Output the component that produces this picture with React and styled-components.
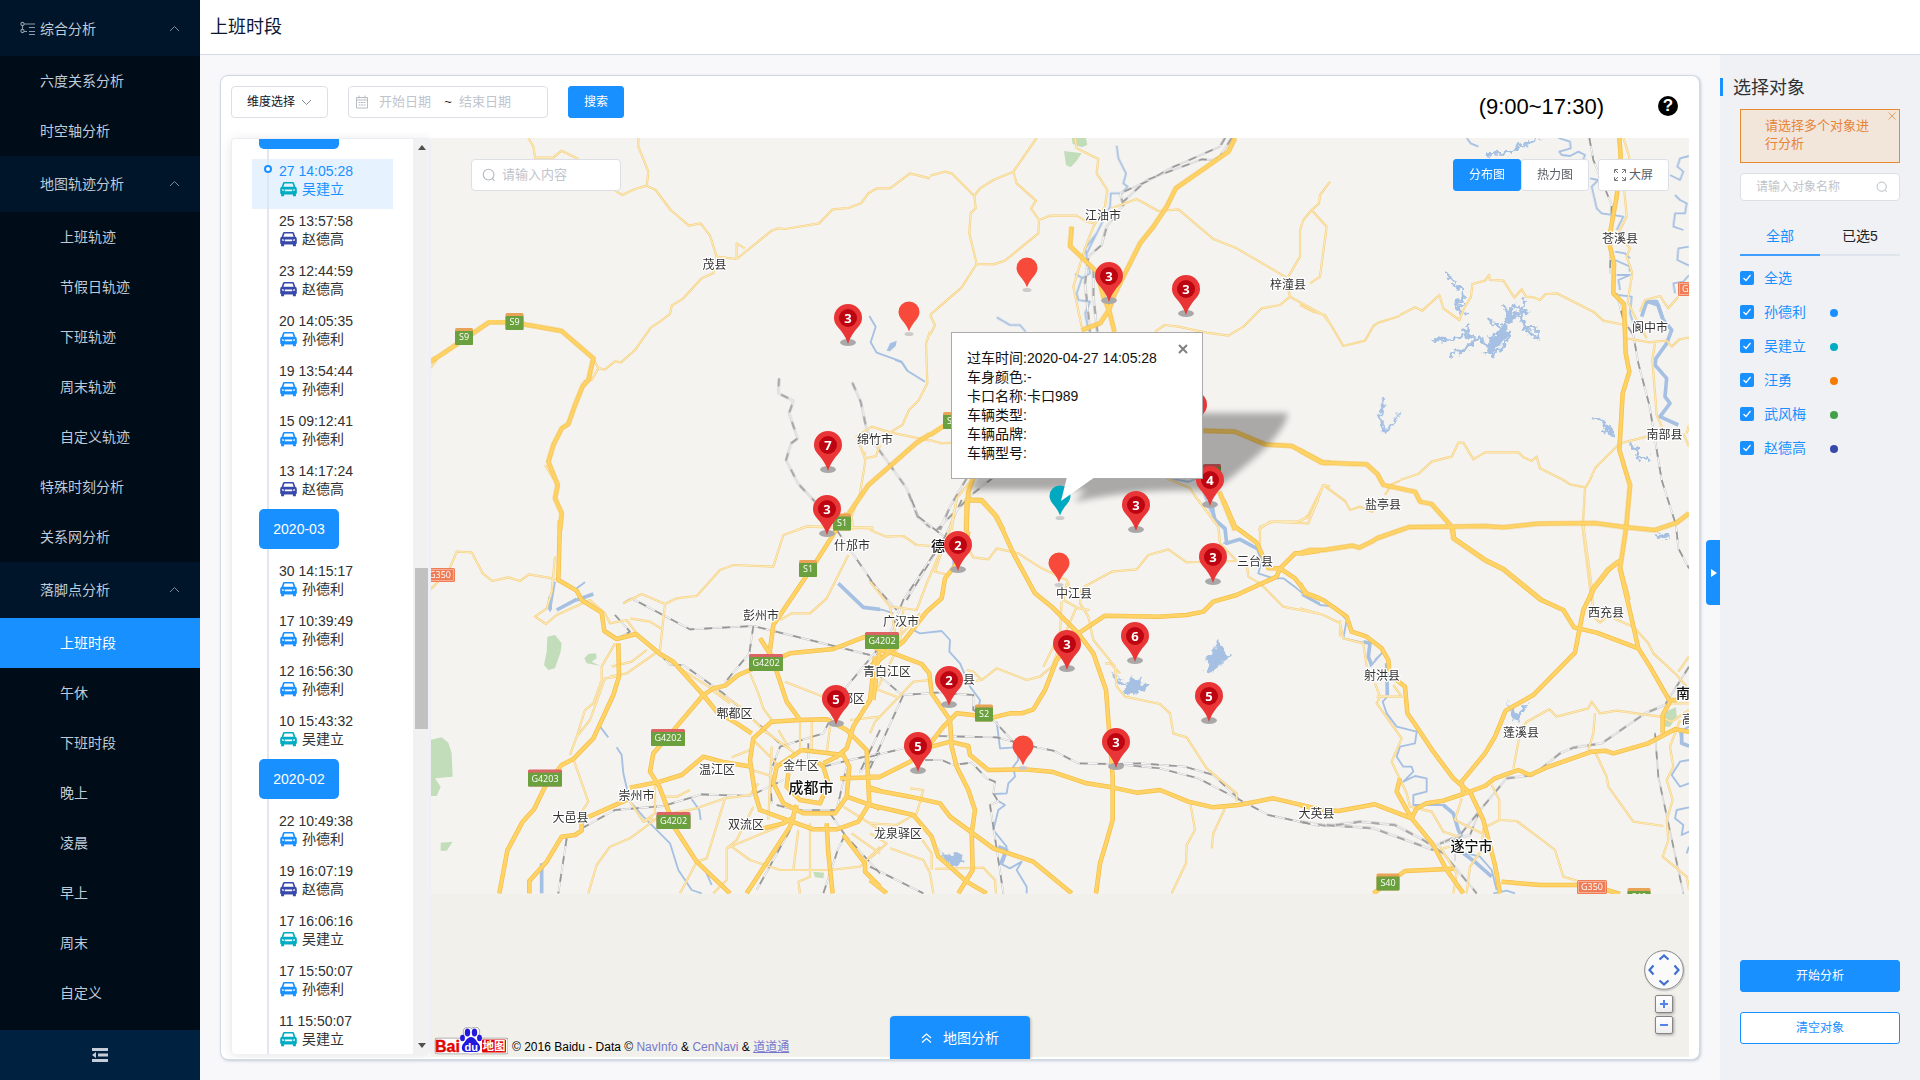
import React from "react";
import styled, { createGlobalStyle, css } from "styled-components";

const BLUE = "#1890ff";
const SANS = `"Liberation Sans", "Noto Sans CJK SC", sans-serif`;

const GlobalStyle = createGlobalStyle`
  *, *::before, *::after { box-sizing: border-box; }
  body { margin: 0; font-family: ${SANS}; font-size: 14px; color: #303133; overflow: hidden; }
  svg { display: block; flex: none; }
`;

/* ---------- page frame ---------- */
const Page = styled.div`
  display: flex;
  width: 1920px;
  height: 1080px;
  overflow: hidden;
  background: #f8f8fb;
`;
const Column = styled.div`
  display: flex;
  flex-direction: column;
  flex: 1;
  min-width: 0;
`;
const Header = styled.header`
  height: 55px;
  padding-left: 10px;
  background: #fff;
  border-bottom: 1px solid #d3dce6;
  font-size: 18px;
  line-height: 54px;
  color: #0a1633;
`;
const Body = styled.div`
  display: flex;
  flex: 1;
  min-height: 0;
`;

/* ---------- side menu ---------- */
const Sidebar = styled.nav`
  display: flex;
  flex-direction: column;
  width: 200px;
  background: #000c17;
  color: #bfcbd9;
`;
const MenuGroup = styled.div`
  display: flex;
  align-items: center;
  height: 56px;
  padding: ${(p) => (p.$root ? 1 : 0)}px 20px 0 ${(p) => (p.$root ? 20 : 40)}px;
  background: #001529;
  line-height: 20px;
  span { flex: 1; padding-left: ${(p) => (p.$root ? 5 : 0)}px; }
`;
const MenuItem = styled.div`
  height: 50px;
  line-height: 50px;
  padding-left: ${(p) => (p.$deep ? 60 : 40)}px;
  ${(p) => p.$active && css`background: ${BLUE}; color: #fff;`}
`;
const Collapse = styled.div`
  display: flex;
  justify-content: center;
  align-items: center;
  height: 50px;
  margin-top: auto;
  background: #002140;
`;

/* ---------- card and toolbar ---------- */
const Card = styled.section`
  display: flex;
  flex-direction: column;
  width: 1480px;
  height: 985px;
  margin: 20px 0 0 20px;
  padding: 10px 10px 0 10px;
  background: #fff;
  border: 1px solid #d0dae5;
  border-radius: 8px;
  box-shadow: 1px 1px 3px #c3cad3;
`;
const Toolbar = styled.div`
  display: flex;
  align-items: center;
  height: 32px;
`;
const Field = styled.div`
  display: flex;
  align-items: center;
  width: ${(p) => p.$w}px;
  height: ${(p) => p.$h || 32}px;
  padding: 0 ${(p) => p.$pad || 10}px;
  border: 1px solid #dcdfe6;
  border-radius: 4px;
  background: #fff;
  font-size: ${(p) => p.$size || 13}px;
  line-height: 18px;
  color: ${(p) => p.$color || "#c0c4cc"};
`;
const Dropdown = styled(Field)`
  justify-content: space-between;
  margin-right: 20px;
  color: #101428;
`;
const DateRange = styled(Field)`
  padding: 0 6px;
  margin-right: 20px;
  span { margin-left: 10px; width: 52px; }
  i { width: 28px; padding-left: 6px; text-align: center; font-style: normal; color: #222; margin-right: -10px; }
`;
const Button = styled.button`
  display: flex;
  align-items: center;
  justify-content: center;
  width: ${(p) => p.$w}px;
  height: 32px;
  padding: 0;
  border: 1px solid ${(p) => (p.$kind === "plain" ? "#dcdfe6" : BLUE)};
  border-radius: 3px;
  background: ${(p) => (p.$kind ? "#fff" : BLUE)};
  color: ${(p) => (p.$kind === "plain" ? "#5a5d63" : p.$kind === "outline" ? BLUE : "#fff")};
  font: 12px/18px ${SANS};
`;
const Hours = styled.div`
  margin-left: auto;
  padding-top: 10px;
  margin-right: 54px;
  font-size: 22px;
  line-height: 30px;
  color: #000;
`;
const Help = styled.div`
  display: flex;
  align-items: center;
  justify-content: center;
  width: 20px;
  height: 20px;
  margin: 8px 11px 0 0;
  border-radius: 50%;
  background: #000;
  color: #fff;
  font-weight: bold;
  font-size: 17px;
  line-height: 20px;
`;
const Content = styled.div`
  display: flex;
  margin-top: 20px;
  height: 919px;
`;

/* ---------- timeline ---------- */
const Timeline = styled.div`
  display: flex;
  width: 200px;
  height: 916px;
  border: 1px solid #ebeef5;
  border-bottom: 0;
  border-radius: 4px;
  box-shadow: 0 2px 12px rgba(0, 0, 0, 0.1);
  overflow: hidden;
  clip-path: inset(-12px 0 -4px -11px);
`;
const TimelineView = styled.div`
  flex: 1;
  overflow: hidden;
`;
const TimelineList = styled.div`
  margin-top: -30px;
  background: linear-gradient(#e4e7ed, #e4e7ed) 35px 0 / 2px 100% no-repeat;
`;
const Month = styled.div`
  width: 80px;
  height: 40px;
  margin: 0 0 10px 27px;
  border-radius: 5px;
  background: ${BLUE};
  color: #fff;
  text-align: center;
  line-height: 40px;
`;
const Stop = styled.div`
  position: relative;
  width: 141px;
  height: 50px;
  margin-left: 20px;
  padding: 3px 0 0 27px;
  line-height: 18px;
  color: ${(p) => (p.$active ? BLUE : "#303133")};
  ${(p) => p.$active && css`
    background: linear-gradient(#dbe7f3, #dbe7f3) 15px 0 / 2px 100% no-repeat #e6f3ff;
    &::before {
      content: "";
      position: absolute;
      left: 12px;
      top: 6px;
      width: 8px;
      height: 8px;
      border: 2px solid ${BLUE};
      border-radius: 50%;
      background: #fff;
    }
  `}
`;
const Person = styled.div`
  display: flex;
  align-items: center;
  gap: 5px;
  height: 18px;
  padding-left: 1px;
`;
const Scrollbar = styled.div`
  display: flex;
  flex-direction: column;
  align-items: center;
  justify-content: space-between;
  width: 17px;
  padding: 6px 0 6px;
  background: #f1f1f1;
`;
const Arrow = styled.div`
  border: 4px solid transparent;
  border-top-width: ${(p) => (p.$up ? 0 : 5)}px;
  border-bottom-width: ${(p) => (p.$up ? 5 : 0)}px;
  border-${(p) => (p.$up ? "bottom" : "top")}-color: #505050;
`;
const Thumb = styled.div`
  width: 13px;
  height: 161px;
  margin-top: 103px;
  background: #c1c1c1;
`;

/* ---------- map ---------- */
const MapBox = styled.div`
  position: relative;
  width: 1258px;
  height: 919px;
  background: #f1f0eb;
  clip-path: inset(0 0 -2px 0);
`;
const Canvas = styled.svg`
  width: 1258px;
  height: 756px;
`;
const Overlay = styled.div`
  position: absolute;
  display: flex;
  left: ${(p) => p.$x}px;
  top: ${(p) => p.$y}px;
  gap: ${(p) => p.$gap || 0}px;
`;
const PinBox = styled.div`
  position: absolute;
  width: 32px;
  height: 46px;
  svg { position: absolute; inset: 0; }
`;
const PinCount = styled.div`
  position: absolute;
  left: 0;
  top: 6px;
  width: 32px;
  text-align: center;
  color: #fff;
  font: bold 13px/18px "Open Sans", "Liberation Sans", sans-serif;
`;
const Popup = styled.div`
  position: absolute;
  left: 520px;
  top: 194px;
  width: 252px;
  height: 147px;
  padding: 16px 15px;
  border: 1px solid #ababab;
  background: #fff;
  color: #111;
  line-height: 19px;
`;
const PopupShadow = styled.svg`
  position: absolute;
  left: 500px;
  top: 240px;
`;
const PopupClose = styled.svg`
  position: absolute;
  right: 14px;
  top: 11px;
`;
const PopupTail = styled.svg`
  position: absolute;
  left: 105px;
  top: 144px;
`;
const PanWheel = styled.svg`
  position: absolute;
  left: 1211px;
  top: 810px;
`;
const ZoomKey = styled.div`
  width: 18px;
  height: 18px;
  border: 1px solid #858585;
  border-radius: 2px;
  background: linear-gradient(#fff, #eee);
  box-shadow: 1px 1px 3px rgba(0, 0, 0, 0.35);
  display: flex;
  align-items: center;
  justify-content: center;
`;
const ZoomKeys = styled(Overlay)`
  flex-direction: column;
`;
const Analyse = styled(Overlay)`
  align-items: center;
  justify-content: center;
  width: 140px;
  height: 43px;
  border-radius: 4px 4px 0 0;
  background: ${BLUE};
  color: #fff;
  line-height: 20px;
  box-shadow: 1px 1px 3px rgba(0, 0, 0, 0.25);
`;
const Copyright = styled(Overlay)`
  align-items: flex-end;
  font-size: 12px;
  line-height: 16px;
  color: #000;
  white-space: pre;
  b { font-weight: 400; color: #7777cc; }
  u { color: #7777cc; }
`;

/* ---------- right panel ---------- */
const Gutter = styled.div`
  display: flex;
  align-items: center;
  width: 20px;
  justify-content: flex-end;
  padding-bottom: 10px;
`;
const Handle = styled.div`
  display: flex;
  align-items: center;
  justify-content: center;
  width: 14px;
  height: 65px;
  margin-top: 20px;
  padding-left: 1px;
  border-radius: 4px 0 0 4px;
  background: ${BLUE};
  &::after { content: ""; border: 4.5px solid transparent; border-left: 6px solid #fff; border-right: 0; }
`;
const Aside = styled.aside`
  display: flex;
  flex-direction: column;
  width: 200px;
  padding: 23px 20px 36px;
  background: #f0f1f5;
`;
const AsideTitle = styled.div`
  height: 18px;
  margin-left: -20px;
  padding-left: 10px;
  border-left: 3px solid ${BLUE};
  font-size: 18px;
  line-height: 20px;
`;
const Alert = styled.div`
  display: flex;
  height: 54px;
  margin: 13px 0 10px;
  padding: 7px 3px 0 24px;
  border: 1px solid #e6892f;
  background: #f2e6da;
  color: #e6843a;
  font-size: 13px;
  line-height: 18px;
  p { margin: 0; width: 112px; word-break: break-all; }
  svg { margin: -5px 0 0 auto; }
`;
const Tabs = styled.div`
  display: flex;
  height: 41px;
  margin: 14px 0 5px;
`;
const Tab = styled.div`
  flex: 1;
  text-align: center;
  line-height: 42px;
  color: ${(p) => (p.$on ? BLUE : "#222")};
  border-bottom: 2px solid ${(p) => (p.$on ? "#409eff" : "#dfe4ed")};
`;
const CheckRow = styled.div`
  display: flex;
  align-items: center;
  height: 34px;
  color: ${BLUE};
  line-height: 20px;
  span { width: 66px; }
`;
const Check = styled.div`
  display: flex;
  align-items: center;
  justify-content: center;
  width: 14px;
  height: 14px;
  margin-right: 10px;
  border-radius: 2px;
  background: ${BLUE};
`;
const Dot = styled.div`
  width: 8px;
  height: 8px;
  margin-top: 1px;
  border-radius: 50%;
  background: ${(p) => p.$c};
`;
const Actions = styled.div`
  display: flex;
  flex-direction: column;
  gap: 20px;
  margin-top: auto;
`;

/* ---------- icons ---------- */
const Chevron = ({ d = "M1 6l4.5-4.5L10 6", c = "#7f8b99" }) => (
  <svg width="11" height="8" viewBox="0 0 11 8" fill="none" stroke={c} strokeWidth="1"><path d={d} /></svg>
);
const SearchIcon = ({ s = 14 }) => (
  <svg width={s} height={s} viewBox="0 0 14 14" fill="none" stroke="#b4b8c0" strokeWidth="1.1">
    <circle cx="6.6" cy="6.6" r="5.4" /><path d="M10.5 10.6l2 2.2" />
  </svg>
);
const TreeIcon = () => (
  <svg width="15" height="15" viewBox="0 0 15 15" fill="none" stroke="#8f9ba8" strokeWidth="1.1">
    <circle cx="2.5" cy="3" r="1.6" /><circle cx="2.5" cy="10" r="1.6" />
    <path d="M4 3h11M9 6.5h6M4 10.500h3M2.5 4.500v4M9 10.500h6M9 13.500h6" />
  </svg>
);
const CalendarIcon = () => (
  <svg width="14" height="14" viewBox="0 0 14 14" fill="none" stroke="#b8bcc5">
    <path d="M1.500 2.500h11v10.500h-11zM1.500 5h11M4 .5v3M10 .5v3M3.500 7.500h2M6 7.500h2M8.500 7.500h2M3.500 10h2M6 10h2M8.500 10h2" />
  </svg>
);
const FoldIcon = () => (
  <svg width="16" height="14" viewBox="0 0 16 14" fill="#c5ced8">
    <path d="M0 0h16v3H0zM6 5.500h10v3H6zM0 11h16v3H0zM0 7l4-3v6z" />
  </svg>
);
const CarIcon = ({ c }) => (
  <svg width="17" height="15" viewBox="0 0 17 15" fill={c}>
    <path fillRule="evenodd" d="M4.200 0h8.600q1 0 1.300 1l1.200 3.700q1.500.5 1.500 2.300v4.800h-.9v2.400h-3v-1.800H4.100v1.800h-3v-2.400H.2V7q0-1.800 1.500-2.300L2.900 1q.3-1 1.300-1zM4.500 1.400L3.400 4.700h10.200l-1.100-3.300zM2 7.200v1.400l1.800.3V7.500zM15 7.200v1.400l-1.800.3V7.500zM4.800 7.400v1.900h7.400V7.400z" />
  </svg>
);
const ExpandIcon = () => (
  <svg width="12" height="12" viewBox="0 0 12 12" fill="none" stroke="#777">
    <path d="M.5 4V.5H4M8 .5h3.500V4M11.500 8v3.500H8M4 11.500H.5V8M1 1l3 3M11 1L8 4M11 11L8 8M1 11l3-3" />
  </svg>
);
const CloseIcon = ({ c = "#e6a06a", w = 1 }) => (
  <svg width="8" height="8" viewBox="0 0 8 8" stroke={c} strokeWidth={w}><path d="M.5.5l7 7M7.500.5l-7 7" /></svg>
);

/* ---------- map data: one survey sheet per area, 3 units to a pixel ---------- */
const sheets = [
  {
    x: 430, y: 130,
    major: ["0,695 20,683 80,643 178,576 250,577 395,603 490,685 475,750 458,768 435,825 415,882 395,895 370,945 355,995 383,1065 375,1105 395,1150 390,1200", "1500,912 1460,938 1315,1065 1250,1160"],
    minor: ["295,24 310,50 315,83 370,83 395,62 445,87", "555,182 577,195 615,177 650,167 655,125 625,50 625,24", "650,167 677,180 722,240 777,287 812,280 840,317 860,380 920,387 1025,302 1045,295 1065,297 1168,280 1208,238 1255,234 1293,220 1315,190 1342,175 1380,175 1440,130 1500,145", "920,387 920,340 945,355", "860,380 850,430 815,445 760,505 725,527 720,552 690,575 663,592 615,660 573,697 555,694 525,718 505,715 492,690", "505,715 485,750 460,755", "1500,605 1488,640 1492,760 1465,812 1437,840 1417,885 1380,907 1500,932", "1380,907 1325,890 1280,920 1305,985 1338,978 1350,945", "1305,965 1305,1000 1290,1090 1265,1160 1270,1200", "1100,1200 1125,1190 1200,1190 1330,1193", "345,1005 370,1045", "0,715 20,690"],
    rail: ["1047,745 1045,790 1090,812 1077,850 1103,925 1083,940 1068,990 1105,1062 1155,1115", "1267,758 1292,815 1310,900 1340,950 1430,1075 1463,1160 1500,1192"],
    river: ["1318,558 1337,590 1322,637 1340,668 1415,695 1432,722 1485,755", "1395,690 1415,697 1432,722"],
    lake: ["1370,662 1380,640 1400,632 1397,648 1380,664"],
  },
  {
    x: 930, y: 130,
    major: ["915,24 895,65 737,175 710,230 670,290 630,340 580,440 555,490 537,540 510,580 455,600", "425,290 420,348 500,425 520,500 537,540 553,605", "820,902 915,905 1005,943 1085,948 1180,998 1200,998", "0,915 60,875", "130,1042 115,1085 108,1200", "110,1110 155,1112 195,1155 220,1200", "868,1085 915,1200"],
    minor: ["0,137 45,125 65,130 133,198 137,235 122,250 118,310 140,402", "133,198 150,175 190,150 250,125 320,24", "250,125 260,160 318,212 303,235 327,270 325,310 225,392 190,403 140,402 95,472 0,555", "327,270 360,257 440,257 470,275 495,280", "0,555 15,585 0,615", "435,24 440,55 505,87 500,130 532,180 525,230 490,290 465,355 430,470 455,590", "545,235 620,207 685,243 745,238 850,327 920,355 1065,440 1080,500 1050,525 995,535 940,590 895,617 830,608 745,590 705,585 675,605", "1080,500 1180,555 1200,580", "1200,155 1170,195 1167,220 1145,240 1120,270 1110,300 1110,380 1075,440", "1145,240 1190,290 1170,440 1140,460", "0,930 35,940 64,938", "710,1045 780,1075 800,1105 865,1190", "985,1200 1020,1175 1135,1180 1180,1065 1200,1070", "130,1042 80,1105 65,1200"],
    rail: ["905,24 870,80 845,90 815,88 650,150 580,215", "885,24 870,50 720,115 660,150 570,190 580,225 530,290 515,345 475,380 465,460 480,605", "490,420 490,500 502,605", "190,1042 130,1090 20,1200", "110,1045 60,1130 30,1200"],
    river: ["560,47 565,85 588,130 580,160 593,170 575,190 542,190 540,230 500,310 465,355 480,430 455,445 440,490 445,510 480,515 465,550 475,600", "500,310 480,350 468,375", "200,562 240,585 270,585 287,605", "720,1045 775,1055 815,1040", "820,1085 835,1130 858,1170 885,1200", "435,432 460,445", "850,1130 853,1165"],
    park: ["425,24 468,24 472,45 455,52 428,42", "402,63 455,70 440,92 422,112 408,105"],
  },
  {
    x: 1400, y: 0,
    major: ["658,414 662,470 650,590 630,700 630,740 642,790 640,880 672,912 677,1060 688,1115 668,1180 658,1350 685,1440"],
    minor: ["670,414 688,470 672,560 680,650 655,700 690,745 680,770 697,820 683,905 710,960 740,1015", "0,945 45,922 67,932 118,885 130,925 178,960 190,930 213,890 217,852 255,842 267,825 270,840 310,842 343,893 365,868 378,890 400,892 420,900 437,882 470,880 580,935 610,962 675,975", "0,1440 55,1422 95,1385 155,1370 175,1328 190,1328 220,1378 255,1357 355,1357 370,1372 395,1383 410,1370 420,1405 490,1440", "570,1440 585,1405 660,1330 740,1310", "850,1300 867,1340", "867,1275 860,1300", "680,1015 750,1027 765,1025 800,1022 815,1040 838,1018 867,1013", "765,1030 757,1080 765,1180 770,1245 790,1290", "720,935 735,900 780,888 805,925 835,890"],
    rail: ["568,414 580,480 635,615 630,820", "650,880 670,960 700,1005 715,1090 748,1215 785,1440"],
    river: ["200,414 212,430 235,440", "475,414 510,425 512,445 478,455 485,465 510,468 535,455 555,465 545,490", "570,535 595,540 575,560 590,625 605,640 670,650 650,690", "867,468 840,475 832,500 850,515 840,540 810,525", "825,585 840,600 860,610 855,640 825,640 820,680 850,690", "867,740 835,745 832,780 867,797", "645,755 675,760 690,775", "645,780 690,800 688,815", "650,825 690,825 655,840 660,870", "867,825 850,845 820,850 825,880", "655,885 695,890 690,940 700,970"],
    wide: ["725,950 740,905 770,905 790,960 815,990 800,1030 768,1075 765,1095 800,1135 795,1190 810,1210 780,1250 835,1275", "745,905 775,915 787,955"],
    inlet: ["270,475 265,460 320,460 350,450 355,435 400,425 420,414", "138,815 165,855 185,870 188,900 165,905 180,940 205,938", "160,910 190,915 178,930", "98,1018 150,1022 190,1005 225,1020 240,1010 260,1040 300,1000 320,960 360,945 375,900", "150,1070 165,1050 180,1060 215,1035 225,1020", "160,1055 200,1050 215,1030", "300,1000 330,1000 310,1040 270,1070", "360,945 380,990 415,1020", "365,985 410,985 415,1020", "370,930 388,935", "265,955 285,975 320,985", "205,970 200,1000 220,1010", "190,990 210,985", "305,915 325,935 345,915 385,940", "325,935 330,960", "255,1060 275,1050 280,1075", "580,1250 605,1260 625,1300 650,1310", "610,1300 630,1285 635,1300", "690,1330 710,1350 715,1375 745,1370 745,1385"],
    basin: ["255,1045 275,1005 305,985 325,970 325,1005 305,1030 275,1060", "320,945 345,935 352,950 325,968"],
  },
  {
    x: 1300, y: 200,
    major: ["0,752 65,788 200,793 232,822 250,855 345,875 360,905 395,912 455,980 460,1015 555,1080 610,1107 725,1200", "0,1060 30,1050 70,1050 158,1037 178,1043 215,1025 230,1015 328,981 455,980 555,978 610,982 715,971 885,969 980,982 1065,990 1130,968 1167,940", "985,840 990,855 978,985 960,1105 985,1200", "955,1085 925,1108 880,1165 868,1200"],
    minor: ["0,315 40,335 75,345 130,438 195,422 220,378 235,368 300,348", "255,885 275,853 300,842", "870,840 855,865 848,985 870,1165 872,1200", "790,840 810,853 855,862", "0,965 25,945 70,855 135,903 150,930 180,920 220,937"],
    rail: ["1085,840 1128,975 1135,1045 1167,1105"],
    inlet: ["252,595 245,630 240,655 258,698 298,640"],
    basin: ["1060,1000 1080,1005 1105,1000 1110,1015 1085,1018"],
  },
  {
    x: 430, y: 520,
    major: ["390,0 385,180 440,212 455,240 515,278 523,333 560,357 618,342 690,402 730,425 820,525 860,575 920,610 965,640", "1250,-20 1155,130 1030,315 1018,405", "990,355 1022,405", "1022,400 1070,545 1110,600", "1110,600 1025,605 970,655 960,720 975,820 990,870 1085,905 1150,928 1220,928 1285,905 1318,850 1310,690 1250,630 1190,598 1110,600", "1350,345 1300,352 1210,387 1080,400 960,450 925,465 885,497 850,505 820,525 735,625 670,700 660,755 688,800 735,925 800,1025 900,1120", "565,370 567,470 550,525 490,655 430,717 395,735 345,800 312,868 278,905 232,992 208,1120", "965,740 875,725 820,710 755,765 690,785 600,803", "600,835 455,900 455,932 435,945 395,950 350,1025 298,1083 298,1120", "1115,690 1240,705 1258,740 1250,830 1215,880 1120,880 1060,850 1030,790 1040,740 1115,690", "1155,720 1180,740 1195,790 1170,850 1110,840 1070,800 1075,760", "1100,855 1080,920 950,1120", "1190,910 1195,1000 1208,1120", "1230,775 1350,772", "1180,730 1220,710 1250,685 1270,620 1320,540 1335,410", "1240,945 1305,1030 1305,1055 1350,1100", "1000,925 1060,910 1095,890", "1250,830 1350,865", "1310,800 1350,812"],
    minor: ["0,210 20,190 60,143 80,95 125,97 158,160 187,183 235,172 270,183 297,163 385,178", "375,110 365,215 350,265 315,290 348,312 380,285 480,240 525,280 540,310 590,300 620,340", "555,370 515,440 515,480 490,550 465,570 440,650 420,705", "560,470 525,475 480,600 440,650", "430,717 475,845 452,880 458,910", "580,250 635,222 705,252 690,390 590,460 540,470", "600,295 660,305 700,330", "650,390 605,425 545,440", "705,252 740,235 800,228 870,150 910,135 1030,140 1060,45 1130,20 1200,22 1330,25", "1255,105 1190,235 1140,280 1085,280 1050,300", "960,460 985,520 1000,565 1025,600", "1065,485 1180,530", "475,1120 500,1035 540,980 600,955 680,895", "600,845 640,905 670,895", "750,1120 800,1025 830,1015 885,835", "960,825 885,835 800,865 700,885", "700,830 740,830 780,810", "850,1120 890,1080 890,985 1045,920", "905,980 960,1020 1050,1050 1200,1050 1290,1040 1350,980", "1140,910 1140,1070 1105,1085 1110,1120", "1105,930 1090,1050", "965,655 1050,740", "1000,630 1095,700", "1045,630 1080,690", "1110,600 1110,690", "1145,600 1145,690", "1200,620 1190,700", "905,712 960,690", "1025,680 1015,900", "970,860 920,960 890,985", "690,402 765,455 930,560 1010,640", "840,505 900,550", "965,750 1030,770", "985,790 960,825", "1265,940 1350,1000", "1240,860 1350,930", "675,790 675,880 640,905", "1260,600 1350,590"],
    rail: ["580,250 605,235 780,328 970,318 1200,375 1320,405", "970,318 958,400 885,487", "690,402 720,435 760,435 880,520 1000,625 1060,680", "455,925 555,870 700,858 815,823 960,828 1060,780", "410,955 385,1120", "1350,380 1250,500 1180,640 1050,680 1020,760 1025,850", "1350,630 1290,755 1350,700", "1245,945 1225,985 1180,1120", "1080,930 980,1110", "1220,30 1350,220", "1135,670 1135,720", "555,285 600,335 565,355", "1040,855 1100,870 1220,870 1250,740", "1200,880 1245,945 1350,1060", "1180,740 1260,720 1350,700"],
    river: ["510,620 535,652", "560,682 575,705 580,760 600,845 640,890 720,970 745,1050 785,1110 815,1120", "440,205 465,187", "785,838 808,870 812,900", "830,1060 845,1095", "375,185 360,275"],
    wide: ["1225,190 1300,262 1350,268", "335,1030 335,1120", "360,230 360,270", "440,240 490,222", "380,270 440,238"],
    park: ["352,350 375,345 395,370 392,395 375,445 355,450 342,435 350,395", "463,415 475,402 498,400 500,415 485,425 510,437 470,430", "0,660 35,652 55,668 65,700 68,770 15,775 32,800 20,828 0,828", "32,968 68,965 55,985 50,992 32,992", "1150,1055 1182,1058 1180,1075 1155,1072"],
  },
  {
    x: 870, y: 500,
    major: ["290,95 290,0 335,0 380,50 430,160 495,280 545,320 625,400 670,460 708,570 728,830 728,960 708,1030 690,1090 678,1180", "295,95 285,160 225,235 215,295 170,335 100,425 0,500", "625,400 705,347 865,350 950,345 1000,335 1030,305 1100,285 1220,230 1230,205 1275,160 1300,160 1350,152", "15,445 70,460 155,492 178,520 185,580 240,660 245,740 260,800 295,870 315,930 305,1000 308,1110 265,1180", "625,400 560,480 525,570 490,628 455,640 420,640 370,652 260,640 220,680 170,745 120,785 30,830 0,830", "185,740 240,725 295,738 300,765 355,810 460,808 545,815 650,850 725,862 800,878 870,870 955,905 1030,922 1105,915 1210,895 1350,928", "0,868 120,890 210,910 240,950 370,1045 490,1085 605,1180", "0,915 130,945 185,1010 205,1070 290,1145 350,1180", "0,1140 50,1180", "1060,0 1095,80 1160,128 1195,205 1230,205 1275,235 1310,280 1350,295", "30,440 10,600"],
    minor: ["0,90 50,110 100,108 140,135 220,140", "260,0 240,90 200,180 170,250 140,330 60,320 0,245", "220,140 195,215 235,225", "300,155 310,172 355,178 380,145 445,160 515,205 590,240 600,262", "640,262 725,215 800,208 835,165 895,148 950,187 1100,183", "590,250 580,300 625,325 660,330", "635,265 630,310 655,350 670,420 735,500 740,560 765,590 870,612 900,640 910,700 950,712 1010,805 1100,880 1100,905", "575,305 570,400 520,500", "620,320 590,390 545,500 510,530 470,540 380,505 335,540", "290,510 310,515 335,540 300,545", "960,905 975,990 950,1035 948,1090 905,1180", "1065,925 1030,1000 1025,1045", "985,0 1045,80 1050,130 1100,183", "1170,140 1170,80 1210,65 1280,65 1320,50 1345,0", "1130,190 1135,230 1170,250 1240,320 1350,342", "120,865 160,870 140,940 80,975 0,970", "0,1075 50,1030 0,1000", "60,1045 160,1080 180,1120 190,1180", "195,1107 340,1103 375,1140 378,1180", "100,330 90,430 20,570", "0,700 15,665 130,545 185,540", "0,560 80,590", "150,1010 185,1060 185,1110", "705,490 720,490 750,520", "60,320 80,420 150,340"],
    rail: ["125,0 145,50 225,112 100,300 60,400 0,500", "275,0 225,110 110,300", "0,240 80,330", "0,805 100,585 200,578 310,585 310,630 370,660 430,725 500,742 550,752 625,790 735,792 870,805 985,835 1110,900 1195,945 1350,978", "735,792 810,790 945,800 1030,825 1110,900", "0,770 100,745 200,708 380,712 430,725", "165,780 215,780 250,795 305,788 350,835 375,845 370,880 385,905 360,915 370,980 400,1180", "0,1100 160,1180", "20,520 90,580"],
    river: ["0,325 40,330 70,340", "130,390 150,400 215,393 240,420 238,455 270,490 300,560 330,600 325,630", "380,665 390,745 440,742 445,780 430,800 435,830 415,850 410,880 375,882", "380,900 405,915 385,930 370,990 410,1040 390,1090 420,1105 455,1085 440,1110 470,1160 470,1180", "1060,130 1110,118 1160,145 1175,185 1165,220 1210,235 1240,235 1280,265 1310,290 1350,310", "250,150 250,200"],
    wide: ["1020,0 1035,60 1065,85 1070,130 1110,118 1160,145", "385,1040 410,1050 395,1090"],
    basin: ["1045,420 1060,450 1082,470 1060,485 1040,505 1020,520 1008,510 1018,490 1005,482 1025,460", "725,512 745,535 770,550 785,528 800,545 815,530 818,552 840,550 825,575 805,572 790,585 765,580 765,560 740,550", "205,1045 225,1065 250,1060 275,1060 278,1085 255,1100 230,1085"],
  },
  {
    x: 1300, y: 520,
    major: ["458,20 462,55 555,120 610,148 720,238 790,270 822,322 890,338 1015,385", "960,122 925,150 880,208 850,270 838,330 825,398 700,525 617,572 585,650 555,700 485,785 490,820", "960,145 998,310 1015,385 1050,440 1110,545 1088,585 1088,640", "1105,540 1130,540", "0,190 15,220 70,240 140,290 155,335 200,350 245,385 265,420 268,455", "290,480 315,500 322,580 350,620 400,695 460,775 512,820 550,900 585,1035 600,1120", "1167,635 1125,628 1045,670 940,700 915,692 875,695 740,742 690,765 655,750 585,775 555,798 490,822 430,842 380,850 350,865 335,895 290,815 300,775", "0,855 50,868 115,873 225,853 335,895 400,975 440,1050 490,1120", "460,1046 315,1053 220,1120", "605,1085 720,1095 830,1095 920,1110 960,1122"],
    minor: ["0,265 70,285 120,310 130,355 190,370 200,440", "225,490 240,530 230,550 305,655 275,725 320,820 330,860 395,875 430,935 475,950", "230,530 305,530 280,495", "940,295 1000,320 1045,370 1060,400 1130,465 1160,500", "1135,455 1167,410", "848,0 875,200 880,290 900,308 920,290", "640,745 660,640 680,605 748,568 770,590 865,565 875,545 900,580 950,572 1080,590 1115,605", "885,580 880,640 865,690", "885,695 920,770 925,800 1000,905 1090,918", "1140,600 1110,680 1120,740 1100,780 1118,840 1100,900 1105,960 1088,1010 1160,1070 1167,1110", "575,795 598,840 598,900 650,903 720,955 765,990 790,1070 830,1082", "598,900 550,925 545,990 510,1040 500,1120", "485,835 465,900 545,940", "420,980 470,1060 460,1120", "430,985 470,975", "1110,550 1167,550", "1115,605 1167,570", "120,300 120,350"],
    rail: ["1167,440 1095,555 1035,580 905,670 820,683 780,700 700,765 620,775 545,865 480,945 410,975", "0,905 85,918 180,905 285,915 370,960 430,1000 530,1120", "80,915 220,925 400,990", "1065,640 1075,770 1150,1120", "465,965 465,1020", "540,870 510,945 420,970"],
    river: ["5,225 60,255 105,260 140,300 130,355 200,370", "210,440 245,400 225,420", "262,530 248,545 260,580 290,620 350,635 345,670 300,680 290,710 310,740 335,740 340,755 310,785 345,768 380,775 380,815 340,825 340,855 430,855 460,880 475,930", "500,1000 540,1010 575,1050 590,1110", "1167,620 1140,635 1145,670 1167,680", "1167,720 1140,725 1115,765 1140,800 1167,790", "1167,862 1130,870 1125,895 1150,915 1145,945 1167,935", "1167,980 1160,1000", "580,1120 620,1112 645,1120"],
    wide: ["190,365 210,370 205,410 215,435", "260,430 262,525", "430,855 460,880 475,930 485,950", "490,1000 530,1030 575,1070", "1145,630 1145,670 1167,678"],
    basin: ["620,535 630,560 655,580 685,545 665,590 650,608 635,585", "1060,40 1080,45 1105,40 1110,55 1085,58"],
    park: ["1095,575 1128,562 1130,590 1110,620 1092,620"],
  },
];

const places = [
  ["茂县", 714.5, 265], ["绵竹市", 875, 440], ["江油市", 1103, 216], ["梓潼县", 1288, 285], ["苍溪县", 1620, 239],
  ["阆中市", 1650, 328], ["南部县", 1664.5, 434.5], ["盐亭县", 1383, 505], ["什邡市", 852, 546], ["彭州市", 761, 615.5],
  ["郫都区", 734.5, 714], ["金牛区", 801, 766], ["成都市", 811, 787, 15], ["温江区", 717, 770], ["崇州市", 636.5, 796],
  ["大邑县", 570.5, 818], ["双流区", 746, 824.5], ["龙泉驿区", 898, 833.5], ["青白江区", 887, 671.5], ["广汉市", 901, 622],
  ["德", 938, 546, 14], ["中江县", 1074, 593.5], ["三台县", 1255, 562], ["射洪县", 1382, 675.5], ["西充县", 1606, 613],
  ["蓬溪县", 1521, 732.5], ["大英县", 1316.5, 814], ["遂宁市", 1471.5, 845.5, 14], ["南充市", 1697, 692.5, 14],
  ["高坪区", 1700, 720], ["都区", 853, 699], ["县", 969, 680],
];
const shields = [
  ["S9", 464, 337, 18], ["S9", 514.5, 322, 18], ["S1", 842, 522.5, 18], ["S1", 808, 569, 18], ["S2", 984, 713.5, 18],
  ["S2", 952, 421, 18], ["G5", 1212, 473, 18], ["G4202", 766, 663, 34], ["G4202", 668, 738, 34], ["G4202", 673.5, 821, 34],
  ["G4203", 545, 778.5, 34], ["G4202", 882, 641, 34], ["S40", 1388, 882.5, 23], ["S40", 1639, 897, 23],
  ["G350", 1592, 887, 30, true], ["G350", 440, 575, 30, true], ["G212", 1693, 289, 30, true],
];
const pins = [
  [848, 318, 3], [828, 445, 7], [827, 509, 3], [909, 312], [1027, 268], [1109, 276, 3], [1186, 289, 3], [1193, 405, 3],
  [1210, 480, 4], [1136, 505, 3], [1060, 496, 0, "#00a9bf"], [958, 545, 2], [949, 680, 2], [918, 746, 5], [1059, 563],
  [1023, 746], [1067, 644, 3], [1135, 636, 6], [1209, 696, 5], [1116, 742, 3], [1213, 557, 3], [836, 699, 5],
];

const Layer = ({ kind, ...stroke }) =>
  sheets.filter((s) => s[kind]).map((s) => (
    <g key={s.x + "-" + s.y} transform={`translate(${s.x} ${s.y}) scale(${1 / 3})`} fill="none" strokeLinejoin="round" {...stroke}>
      {s[kind].map((points) => (stroke.fill ? <polygon key={points} points={points} /> : <polyline key={points} points={points} />))}
    </g>
  ));

function MapCanvas() {
  return (
    <Canvas viewBox="431 138 1258 756">
      <defs>
        <filter id="shore" x="-20%" y="-20%" width="140%" height="140%">
          <feTurbulence type="fractalNoise" baseFrequency="0.2" numOctaves="2" seed="4" />
          <feDisplacementMap in="SourceGraphic" scale="9" xChannelSelector="R" yChannelSelector="G" />
        </filter>
      </defs>
      <rect x="431" y="138" width="1258" height="756" fill="#f4f3f0" />
      <Layer kind="park" fill="#c2ddba" />
      <Layer kind="lake" fill="#a5c0e2" />
      <g filter="url(#shore)">
        <Layer kind="inlet" stroke="#a5c0e2" strokeWidth="8" />
        <Layer kind="basin" fill="#a5c0e2" />
      </g>
      <Layer kind="river" stroke="#a5c0e2" strokeWidth="5.500" />
      <Layer kind="wide" stroke="#a5c0e2" strokeWidth="11" />
      <Layer kind="rail" stroke="#bcbcbc" strokeWidth="5.500" />
      <Layer kind="rail" stroke="#fafafa" strokeWidth="3.200" />
      <Layer kind="rail" stroke="#969696" strokeWidth="4.800" strokeDasharray="24 30" />
      <Layer kind="minor" stroke="#f6d07e" strokeWidth="6.600" />
      <Layer kind="minor" stroke="#fdeec4" strokeWidth="2.800" />
      <Layer kind="major" stroke="#f4bd45" strokeWidth="13.500" />
      <Layer kind="major" stroke="#ffd366" strokeWidth="9.500" />
      {shields.map(([name, x, y, w, red]) => (
        <g key={name + x}>
          <rect x={x - w / 2} y={y - (red ? 7 : 9)} width={w} height={red ? 14 : 17} rx="1.500" fill={red ? "#f07c56" : name[0] === "S" ? "#e9a356" : "#dc6464"} />
          {red
            ? <rect x={x - w / 2 + 1.500} y={y - 5.500} width={w - 3} height="11" fill="none" stroke="#f9c3ad" strokeWidth=".7" />
            : <rect x={x - w / 2} y={y - 6} width={w} height="14" rx="1" fill="#6ba03f" />}
          <text x={x} y={y + 3.200} textAnchor="middle" fontFamily="Open Sans" fontSize="9" fill="#fff">{name}</text>
        </g>
      ))}
      {places.map(([name, x, y, size = 12]) => (
        <text key={name} x={x} y={y + size * 0.37} textAnchor="middle" fontFamily="Noto Sans CJK SC" fontSize={size}
          fontWeight={size > 12 ? 500 : 400} fill={size > 12 ? "#111" : "#333"} stroke="#fff" strokeWidth="2.500" strokeLinejoin="round" paintOrder="stroke">{name}</text>
      ))}
    </Canvas>
  );
}

function Pin({ x, y, n, color = "#f84a3a" }) {
  return (
    <PinBox style={{ left: x - 431 - 16, top: y - 138 - 15 }}>
      {n ? (
        <svg width="32" height="46" viewBox="0 0 32 46">
          <ellipse cx="16" cy="39.500" rx="8" ry="3.500" fill="#a9a9a9" />
          <path d="M16 1a14 14 0 0 1 14 14c0 6-4 9-7.500 13.500C19.500 32.500 17.500 36 16 41c-1.500-5-3.500-8.500-6.500-12.500C6 24 2 21 2 15A14 14 0 0 1 16 1z" fill="#e93535" />
          <circle cx="16" cy="15" r="9" fill="#bd0512" />
        </svg>
      ) : (
        <svg width="32" height="46" viewBox="0 0 32 46">
          <ellipse cx="16" cy="37" rx="4.500" ry="2" fill="#cbcbcb" />
          <path d="M16 4.500a10.500 10.500 0 0 1 10.500 10.500c0 5-4.500 9-6.500 12-1.700 2.500-3 4.500-4 7.500-1-3-2.300-5-4-7.500-2-3-6.500-7-6.500-12A10.500 10.500 0 0 1 16 4.500z" fill={color} />
        </svg>
      )}
      {n ? <PinCount>{n}</PinCount> : null}
    </PinBox>
  );
}

const PawLogo = () => (
  <svg width="74" height="28" viewBox="0 0 74 28">
    <g stroke="#999" strokeWidth="4.500" fill="#999" strokeLinejoin="round">
      <rect x="3" y="13" width="69" height="12" /><circle cx="37" cy="16" r="9" /><circle cx="34" cy="5" r="3" /><circle cx="41" cy="5" r="3" />
    </g>
    <g stroke="#fff" strokeWidth="3" fill="#fff" strokeLinejoin="round">
      <rect x="3" y="13" width="69" height="12" /><circle cx="37" cy="16" r="9" /><circle cx="34" cy="5" r="3" /><circle cx="41" cy="5" r="3" />
    </g>
    <g fill="#2319dc">
      <ellipse cx="33.500" cy="5.500" rx="2.700" ry="3.900" /><ellipse cx="40.500" cy="5.500" rx="2.700" ry="3.900" />
      <ellipse cx="28.500" cy="11" rx="2.400" ry="3.300" /><ellipse cx="45.500" cy="11" rx="2.400" ry="3.300" />
      <path d="M37 10c4 0 5 4 7.500 6.500s2.500 8.500-2.500 8.500H32c-5 0-5-6-2.500-8.500S33 10 37 10z" />
    </g>
    <text x="1" y="25" fontFamily="Liberation Sans" fontWeight="bold" fontSize="16.500" fill="#e10602" stroke="#e10602" strokeWidth=".4" textLength="25" lengthAdjust="spacingAndGlyphs">Bai</text>
    <text x="30.500" y="24" fontFamily="Liberation Sans" fontWeight="bold" fontSize="11" fill="#fff">du</text>
    <rect x="48" y="12.500" width="24" height="13" rx="1" fill="#e10602" />
    <text x="48.500" y="23.300" fontFamily="Noto Sans CJK SC" fontWeight="bold" fontSize="11.500" fill="#fff">地图</text>
  </svg>
);

const people = { 孙德利: "#1890ff", 吴建立: "#00acc1", 汪勇: "#f57c00", 武风梅: "#43a047", 赵德高: "#3949ab" };
const timeline = [
  "2020-04", ["27 14:05:28", "吴建立"], ["25 13:57:58", "赵德高"], ["23 12:44:59", "赵德高"], ["20 14:05:35", "孙德利"],
  ["19 13:54:44", "孙德利"], ["15 09:12:41", "孙德利"], ["13 14:17:24", "赵德高"],
  "2020-03", ["30 14:15:17", "孙德利"], ["17 10:39:49", "孙德利"], ["12 16:56:30", "孙德利"], ["10 15:43:32", "吴建立"],
  "2020-02", ["22 10:49:38", "孙德利"], ["19 16:07:19", "赵德高"], ["17 16:06:16", "吴建立"], ["17 15:50:07", "孙德利"], ["11 15:50:07", "吴建立"],
];
const menu = [
  [0, "综合分析"], [1, "六度关系分析"], [1, "时空轴分析"], [9, "地图轨迹分析"], [2, "上班轨迹"], [2, "节假日轨迹"],
  [2, "下班轨迹"], [2, "周末轨迹"], [2, "自定义轨迹"], [1, "特殊时刻分析"], [1, "关系网分析"], [9, "落脚点分析"],
  [2, "上班时段", true], [2, "午休"], [2, "下班时段"], [2, "晚上"], [2, "凌晨"], [2, "早上"], [2, "周末"], [2, "自定义"],
];

export default function App() {
  return (
    <Page>
      <GlobalStyle />
      <Sidebar>
        {menu.map(([level, name, active]) =>
          level === 0 || level === 9 ? (
            <MenuGroup key={name} $root={level === 0}>
              {level === 0 && <TreeIcon />}
              <span>{name}</span>
              <Chevron />
            </MenuGroup>
          ) : (
            <MenuItem key={name} $deep={level === 2} $active={active}>{name}</MenuItem>
          )
        )}
        <Collapse><FoldIcon /></Collapse>
      </Sidebar>
      <Column>
        <Header>上班时段</Header>
        <Body>
          <Card>
            <Toolbar>
              <Dropdown $w={97} $size={12} $pad={15}>维度选择<Chevron d="M1 2l4.500 4.500L10 2" /></Dropdown>
              <DateRange $w={200}>
                <CalendarIcon /><span>开始日期</span><i>~</i><span>结束日期</span>
              </DateRange>
              <Button $w={56}>搜索</Button>
              <Hours>(9:00~17:30)</Hours>
              <Help>?</Help>
            </Toolbar>
            <Content>
              <Timeline>
                <TimelineView>
                  <TimelineList>
                    {timeline.map((t, i) =>
                      typeof t === "string" ? (
                        <Month key={t}>{t}</Month>
                      ) : (
                        <Stop key={i} $active={i === 1}>
                          {t[0]}
                          <Person><CarIcon c={people[t[1]]} />{t[1]}</Person>
                        </Stop>
                      )
                    )}
                  </TimelineList>
                </TimelineView>
                <Scrollbar><Arrow $up /><Thumb /><Arrow /></Scrollbar>
              </Timeline>
              <MapBox>
                <MapCanvas />
                <PopupShadow width="380" height="140" viewBox="931 378 380 140">
                  <defs><filter id="soft" x="-20%" y="-20%" width="140%" height="140%"><feGaussianBlur stdDeviation="3" /></filter></defs>
                  <path d="M1190 413h98q-2 16-30 42-25 22-46 37-60-6-138 10l12-12H970l30-77z" fill="#000" opacity=".3" filter="url(#soft)" />
                </PopupShadow>
                {pins.map(([x, y, n, c]) => <Pin key={x + "," + y} x={x} y={y} n={n} color={c} />)}
                <Popup>
                  <div>过车时间:2020-04-27 14:05:28</div>
                  <div>车身颜色:-</div>
                  <div>卡口名称:卡口989</div>
                  <div>车辆类型:</div>
                  <div>车辆品牌:</div>
                  <div>车辆型号:</div>
                  <PopupClose width="10" height="10" viewBox="0 0 10 10" stroke="#808080" strokeWidth="2"><path d="M1 1l8 8M9 1l-8 8" /></PopupClose>
                  <PopupTail width="40" height="28" viewBox="0 0 40 28"><path d="M10 0L4 24 38 0z" fill="#fff" /></PopupTail>
                </Popup>
                <Overlay $x={40} $y={21}>
                  <Field $w={150}><SearchIcon /><span style={{ marginLeft: 6 }}>请输入内容</span></Field>
                </Overlay>
                <Overlay $x={1022} $y={21}>
                  <Button $w={68}>分布图</Button><Button $w={68} $kind="plain">热力图</Button>
                </Overlay>
                <Overlay $x={1167} $y={21}>
                  <Button $w={71} $kind="plain"><ExpandIcon /><span style={{ marginLeft: 3 }}>大屏</span></Button>
                </Overlay>
                <PanWheel width="44" height="44" viewBox="0 0 44 44" fill="none">
                  <circle cx="22.500" cy="23" r="19.500" stroke="#bbb" strokeWidth="2" opacity=".6" />
                  <circle cx="22" cy="22" r="19.300" fill="#fafafa" stroke="#8c8c8c" />
                  <path d="M17.500 11.500l4.500-4 4.500 4M17.500 32.500l4.500 4 4.500-4M11.500 17.500l-4 4.500 4 4.500M32.500 17.500l4 4.500-4 4.500" stroke="#3f70d0" strokeWidth="2.200" />
                </PanWheel>
                <ZoomKeys $x={1224} $y={857} $gap={3}>
                  <ZoomKey><svg width="8" height="8" stroke="#5283ec" strokeWidth="2"><path d="M0 4h8M4 0v8" /></svg></ZoomKey>
                  <ZoomKey><svg width="8" height="8" stroke="#5283ec" strokeWidth="2"><path d="M0 4h8" /></svg></ZoomKey>
                </ZoomKeys>
                <Copyright $x={3} $y={889} $gap={4}>
                  <PawLogo />
                  <span>© 2016 Baidu - Data © <b>NavInfo</b> &amp; <b>CenNavi</b> &amp; <u>道道通</u></span>
                </Copyright>
                <Analyse $x={459} $y={878} $gap={11}>
                  <svg width="11" height="10" viewBox="0 0 11 10" fill="none" stroke="#fff" strokeWidth="1.200"><path d="M1 5l4.500-4L10 5M1 9.500l4.500-4 4.500 4" /></svg>
                  地图分析
                </Analyse>
              </MapBox>
            </Content>
          </Card>
          <Gutter><Handle /></Gutter>
          <Aside>
            <AsideTitle>选择对象</AsideTitle>
            <Alert><p>请选择多个对象进行分析</p><CloseIcon /></Alert>
            <Field $w={160} $h={28} $pad={11} $size={12}>
              <span style={{ flex: 1, paddingLeft: 4 }}>请输入对象名称</span><SearchIcon s={12} />
            </Field>
            <Tabs><Tab $on>全部</Tab><Tab>已选5</Tab></Tabs>
            {["全选", ...Object.keys(people)].map((name) => (
              <CheckRow key={name}>
                <Check><svg width="10" height="8" viewBox="0 0 10 8" fill="none" stroke="#fff" strokeWidth="1.200"><path d="M1.500 4l2.500 2.500L8.500 1" /></svg></Check>
                <span>{name}</span>
                {people[name] && <Dot $c={people[name]} />}
              </CheckRow>
            ))}
            <Actions>
              <Button $w={160}>开始分析</Button>
              <Button $w={160} $kind="outline">清空对象</Button>
            </Actions>
          </Aside>
        </Body>
      </Column>
    </Page>
  );
}
